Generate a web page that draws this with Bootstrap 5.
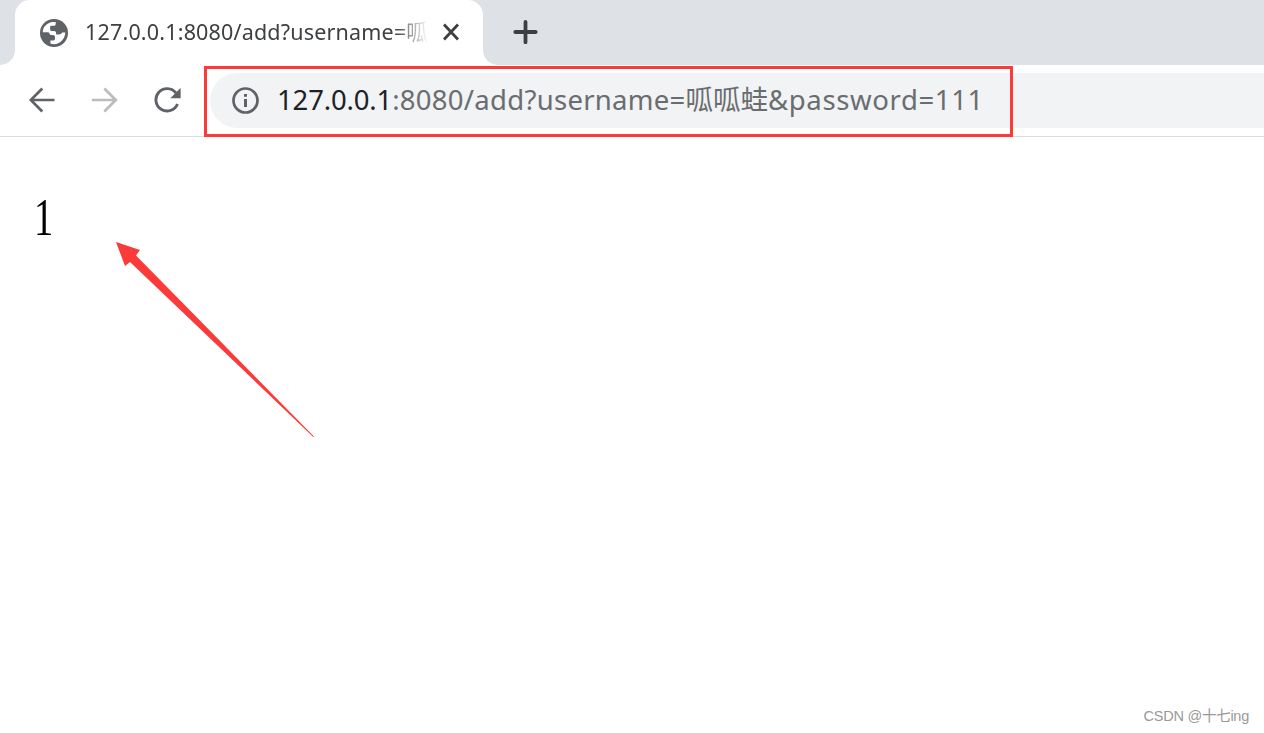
<!DOCTYPE html>
<html lang="zh">
<head>
    <meta charset="UTF-8">
    <meta name="viewport" content="width=device-width, initial-scale=1">
    <title>127.0.0.1:8080/add</title>
    <link href="https://cdn.jsdelivr.net/npm/bootstrap@5.3.0/dist/css/bootstrap.min.css" rel="stylesheet">
    <style>
        body { height: 733px; font-family: "Noto Sans", "Noto Sans CJK SC", sans-serif; color: #000; }
        svg { display: block; flex: none; }
        .tab-strip { height: 65px; background: #dee1e6; }
        .strip-left { width: 15px; background: #fff; }
        .strip-left div { height: 65px; background: #dee1e6; border-bottom-right-radius: 15px; }
        .tab-shape { width: 468px; height: 65px; background: #dee1e6; }
        .tab-body { height: 65px; padding-left: 25px; background: #fff; border-radius: 15px 15px 0 0; }
        .tab-title { width: 343px; margin-left: 17px; padding-bottom: 2px; font-size: 21.5px; line-height: 30px; letter-spacing: .18px; color: #3c4043; white-space: nowrap;
            -webkit-mask-image: linear-gradient(90deg, #000 310px, transparent 343px); mask-image: linear-gradient(90deg, #000 310px, transparent 343px); }
        .tab-close { margin-left: 14px; padding-bottom: 2px; }
        .strip-rest { background: #fff; }
        .strip-rest > div { height: 65px; padding: 0 0 2px 30px; background: #dee1e6; border-bottom-left-radius: 15px; }
        .toolbar { height: 72px; padding-left: 28px; border-bottom: 1px solid #dadce0; }
        .nav-icons { width: 182px; gap: 35px; padding-bottom: 2px; }
        .omnibox { height: 55px; margin-top: 8px; padding-left: 22px; background: #f1f3f4; border-radius: 28px 0 0 28px; }
        .url { margin-left: 18px; padding-bottom: 2px; font-size: 27.5px; line-height: 53px; color: #6a6d70; white-space: nowrap; }
        .url .host { color: #202124; letter-spacing: -.15px; }
        .url .path { letter-spacing: .28px; }
        .url .tail { letter-spacing: .62px; }
        .url-frame { position: absolute; left: 204px; top: 66px; width: 809px; height: 71px; border: 3px solid #fc3a3a; }
        .response { padding: 55px 0 0 32px; font-family: "Liberation Serif", serif; font-size: 52px; line-height: 52px; }
        .response span { display: inline-block; transform: scaleX(.74); transform-origin: 30% 50%; }
        .pointer { position: absolute; left: 110px; top: 235px; }
        .watermark { padding: 0 15px 6px 0; font-family: "Liberation Sans", "Noto Sans CJK SC", sans-serif; font-size: 14.5px; line-height: 22px; letter-spacing: -.25px; color: #999; }
    </style>
</head>
<body class="d-flex flex-column overflow-hidden position-relative bg-white">
    <div class="tab-strip d-flex">
        <div class="strip-left"><div></div></div>
        <div class="tab-shape">
            <div class="tab-body d-flex align-items-center">
                <svg width="28" height="28" viewBox="0 0 28 28">
                    <circle cx="14" cy="14" r="14" fill="#5f6368"/>
                    <path fill="#fff" d="M2.7 13.2C2.9 7.5 7.4 3.2 13 2.9l2.7.2v1.8c0 1.1-.8 1.9-1.9 1.9h-2.3c-.9 0-1.4.6-1.4 1.4v2.4c0 .8.6 1.3 1.5 1.3h2.2c1.5 0 2.3.9 2.3 2.3v1.2h2.8c1.8 0 2.7-.6 3.2-1.8h3.2C24.9 20.3 20 25.2 14 25.2c-1.3 0-2.5-.2-3.6-.6v-3h2.3c1.4 0 2.3-.9 2.3-2.2v-1.2c0-1.3-.9-2.1-2.1-2.1h-1.4c-1.2 0-1.9-.8-2.2-1.8-.3-.8-.8-1.1-1.6-1.1z"/>
                </svg>
                <span class="tab-title">127.0.0.1:8080/add?username=呱</span>
                <div class="tab-close">
                    <svg width="18" height="18" viewBox="0 0 18 18"><path d="M2 1.5l14 15M16 1.5l-14 15" stroke="#3c4043" stroke-width="2.8"/></svg>
                </div>
            </div>
        </div>
        <div class="strip-rest flex-grow-1">
            <div class="d-flex align-items-center">
                <svg width="25" height="24" viewBox="0 0 25 24"><path d="M2.3 12h20.4M12.5 2v20.2" stroke="#3c4043" stroke-width="3.8" stroke-linecap="round"/></svg>
            </div>
        </div>
    </div>
    <div class="toolbar d-flex">
        <div class="nav-icons d-flex align-items-center">
            <svg width="28" height="28" viewBox="0 0 28 28" fill="none" stroke="#5f6368" stroke-width="2.7"><path d="M26.5 14H3M14.3 2.5L2.8 14l11.5 11.5"/></svg>
            <svg width="28" height="28" viewBox="0 0 28 28" fill="none" stroke="#babcbe" stroke-width="2.7"><path d="M.8 14h24M13.3 2.5L24.8 14 13.3 25.5"/></svg>
            <svg width="28" height="28" viewBox="0 0 28 28"><path d="M22 7A11.2 11.2 0 1 0 23.5 18" fill="none" stroke="#5f6368" stroke-width="2.9"/><path d="M26.6 2v10.3H16.3z" fill="#5f6368"/></svg>
        </div>
        <div class="omnibox d-flex align-items-center flex-grow-1">
            <svg width="27" height="27" viewBox="0 0 27 27"><circle cx="13.5" cy="13.5" r="12" fill="none" stroke="#5f6368" stroke-width="2.7"/><path d="M12 7h3v2.7h-3zM12 12h3v8h-3z" fill="#5f6368"/></svg>
            <div class="url"><span class="host">127.0.0.1</span><span class="path">:8080/add?username=</span><span>呱呱蛙</span><span class="tail">&amp;password=111</span></div>
        </div>
    </div>
    <main class="response flex-grow-1"><span>1</span></main>
    <div class="watermark text-end">CSDN @十七ing</div>

    <div class="url-frame"></div>
    <svg class="pointer" width="210" height="210" viewBox="0 0 210 210"><path d="M6 7l24 8-4 5.5L204 201.500l-.7.6L20 27l-5 4z" fill="#fc3a3a"/></svg>
    <script src="https://cdn.jsdelivr.net/npm/bootstrap@5.3.0/dist/js/bootstrap.bundle.min.js"></script>
</body>
</html>
